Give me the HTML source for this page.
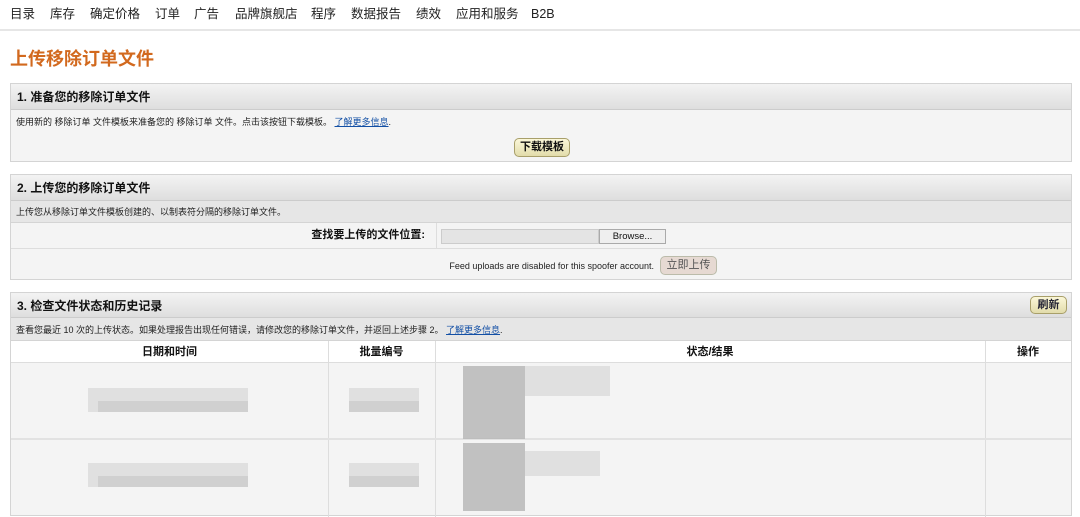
<!DOCTYPE html>
<html><head><meta charset="utf-8"><style>
*{margin:0;padding:0;box-sizing:border-box}
body{width:1080px;height:516px;background:#fff;font-family:"Liberation Sans","Noto Sans CJK SC",sans-serif;color:#111;position:relative;overflow:hidden}
.a{position:absolute}
.nav{top:0;left:0;width:1080px;height:31px;border-bottom:2px solid #e6e6e6}
.nav span{position:absolute;top:6px;font-size:12.5px;line-height:16px;color:#222}
h1{position:absolute;left:10px;top:47px;font-size:18px;line-height:24px;color:#d2691e;font-weight:bold}
.p{position:absolute;left:10px;width:1062px;border:1px solid #d4d4d4;background:#f4f4f4}
.hd{height:26px;background:linear-gradient(#f3f3f3,#dedede);border-bottom:1px solid #ccc;font-size:12px;line-height:16px;font-weight:bold;padding:5px 0 0 6px}
.sm{font-size:9px;line-height:12px;color:#222}
.lk{color:#124fa5;text-decoration:underline}
.btn{position:absolute;border:1px solid #a89f6a;border-radius:5px;background:linear-gradient(#fbf7d8,#e2dcab);font-size:11px;font-weight:bold;text-align:center;color:#111}
.bl{position:absolute;background:#ccc;opacity:.8}
</style></head><body>
<div class="a nav">
<span style="left:10px">目录</span><span style="left:50px">库存</span><span style="left:90px">确定价格</span><span style="left:155px">订单</span><span style="left:194px">广告</span><span style="left:235px">品牌旗舰店</span><span style="left:311px">程序</span><span style="left:351px">数据报告</span><span style="left:416px">绩效</span><span style="left:456px">应用和服务</span><span style="left:531px">B2B</span>
</div>
<h1>上传移除订单文件</h1>

<div class="p" style="top:83px;height:79px">
<div class="hd">1. 准备您的移除订单文件</div>
<div class="a sm" style="left:5px;top:32px">使用新的 移除订单 文件模板来准备您的 移除订单 文件。点击该按钮下载模板。 <span class="lk">了解更多信息</span>.</div>
<div class="btn" style="left:503px;top:54px;width:56px;height:19px;line-height:17px">下载模板</div>
</div>

<div class="p" style="top:174px;height:106px">
<div class="hd">2. 上传您的移除订单文件</div>
<div class="a" style="left:0;top:26px;width:1060px;height:22px;background:#e6e6e6;border-bottom:1px solid #d4d4d4"></div>
<div class="a sm" style="left:5px;top:31px">上传您从移除订单文件模板创建的、以制表符分隔的移除订单文件。</div>
<div class="a" style="left:0;top:73px;width:1060px;border-top:1px solid #ddd"></div>
<div class="a" style="left:425px;top:48px;height:25px;border-left:1px solid #ddd"></div>
<div class="a" style="left:300px;top:53px;width:114px;text-align:right;font-size:11px;line-height:15px;font-weight:bold">查找要上传的文件位置:</div>
<div class="a" style="left:430px;top:54px;width:158px;height:15px;background:#e4e4e4;border:1px solid #ccc"></div>
<div class="a" style="left:588px;top:54px;width:67px;height:15px;background:#efefef;border:1px solid #aaa;font-size:9.5px;text-align:center;line-height:13px">Browse...</div>
<div class="a sm" style="left:300px;top:85px;width:343px;text-align:right">Feed uploads are disabled for this spoofer account.</div>
<div class="a" style="left:649px;top:81px;width:57px;height:19px;border:1px solid #bba;border-radius:5px;background:#e6d9d2;font-size:11px;text-align:center;line-height:17px;color:#555">立即上传</div>
</div>

<div class="p" style="top:292px;height:224px">
<div class="hd" style="height:25px">3. 检查文件状态和历史记录</div>
<div class="btn" style="left:1019px;top:3px;width:37px;height:18px;line-height:16px;color:#223">刷新</div>
<div class="a" style="left:0;top:25px;width:1060px;height:23px;background:#e6e6e6;border-bottom:1px solid #d4d4d4"></div>
<div class="a sm" style="left:5px;top:31px">查看您最近 10 次的上传状态。如果处理报告出现任何错误，请修改您的移除订单文件，并返回上述步骤 2。 <span class="lk">了解更多信息</span>.</div>
<div class="a" style="left:0;top:48px;width:1060px;height:22px;background:#fff;border-bottom:1px solid #ddd"></div>
<div class="a" style="left:0;top:52px;width:317px;text-align:center;font-size:11px;line-height:15px;font-weight:bold">日期和时间</div>
<div class="a" style="left:317px;top:52px;width:107px;text-align:center;font-size:11px;line-height:15px;font-weight:bold">批量编号</div>
<div class="a" style="left:424px;top:52px;width:550px;text-align:center;font-size:11px;line-height:15px;font-weight:bold">状态/结果</div>
<div class="a" style="left:974px;top:52px;width:86px;text-align:center;font-size:11px;line-height:15px;font-weight:bold">操作</div>
<div class="a" style="left:317px;top:48px;height:176px;border-left:1px solid #ddd"></div>
<div class="a" style="left:424px;top:48px;height:176px;border-left:1px solid #ddd"></div>
<div class="a" style="left:974px;top:48px;height:176px;border-left:1px solid #ddd"></div>
<div class="a" style="left:0;top:145px;width:1060px;border-top:2px solid #e2e2e2"></div>
<div class="bl" style="left:77px;top:95px;width:160px;height:24px;opacity:.5"></div><div class="bl" style="left:87px;top:108px;width:150px;height:11px"></div>
<div class="bl" style="left:338px;top:95px;width:70px;height:24px;opacity:.5"></div><div class="bl" style="left:338px;top:108px;width:70px;height:11px"></div>
<div class="bl" style="left:452px;top:73px;width:62px;height:73px;background:#b4b4b4"></div><div class="bl" style="left:514px;top:73px;width:85px;height:30px;opacity:.5"></div>
<div class="bl" style="left:77px;top:170px;width:160px;height:24px;opacity:.5"></div><div class="bl" style="left:87px;top:183px;width:150px;height:11px"></div>
<div class="bl" style="left:338px;top:170px;width:70px;height:24px;opacity:.5"></div><div class="bl" style="left:338px;top:183px;width:70px;height:11px"></div>
<div class="bl" style="left:452px;top:150px;width:62px;height:68px;background:#b4b4b4"></div><div class="bl" style="left:514px;top:158px;width:75px;height:25px;opacity:.5"></div>
</div>
</body></html>
